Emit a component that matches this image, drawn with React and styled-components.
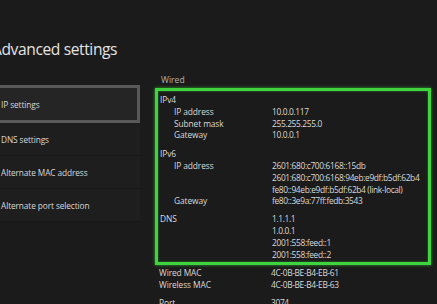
import React from "react"
import styled, { createGlobalStyle } from "styled-components"

const GlobalStyle = createGlobalStyle`
    html, body{
        margin: 0;
        padding: 0;
        background: #1b1b1b;
        overflow: hidden;
    }
    body{
        font-family: "Open Sans", "Noto Sans", sans-serif;
        color: #d6d6d6;
    }
`

const Screen = styled.div`
    width: 437px;
    height: 304px;
    overflow: hidden;
    background: #1b1b1b;
`

const Title = styled.h1`
    margin: 0 0 0 -8px;
    padding-top: 38px;
    height: 49px;
    box-sizing: border-box;
    font-size: 15.6px;
    font-weight: 400;
    line-height: 22px;
    color: #e4e4e4;
    letter-spacing: -0.4px;
`

const Body = styled.div`
    display: flex;
    gap: 15px;
`

const Menu = styled.div`
    width: 150px;
    margin-left: -10px;
    padding-top: 36px;
    display: flex;
    flex-direction: column;
`

const MenuItem = styled.div`
    height: ${p => p.$selected ? 38 : 33}px;
    box-sizing: border-box;
    display: flex;
    align-items: center;
    padding-left: ${p => p.$selected ? 8 : 11}px;
    font-size: 8.3px;
    letter-spacing: -0.1px;
    color: #d8d8d8;
    background: ${p => p.$selected ? '#252525' : '#1e1e1e'};
    border: ${p => p.$selected ? '3px solid #585858' : 'none'};
    border-bottom: ${p => p.$selected ? '3px solid #585858' : '1px solid #181818'};
`

const Details = styled.div`
    width: 276px;
    padding-top: 25px;
`

const Caption = styled.div`
    font-size: 8.6px;
    line-height: 12px;
    color: #b4b4b4;
    padding-left: 6px;
    margin-bottom: 2px;
`

const Highlight = styled.div`
    border: 3px solid #3fd43f;
    box-shadow: 0 0 3px #2fa52f, inset 0 0 2px #2fa52f;
    padding: 3px 0 2px 2px;
`

const Section = styled.div`
    margin-bottom: ${p => p.$gap || 0}px;
`

const Row = styled.div`
    display: grid;
    grid-template-columns: 112px 1fr;
    font-size: 8.4px;
    line-height: 11.8px;
    color: #dadada;
    white-space: nowrap;
`

const Label = styled.span`
    padding-left: ${p => p.$indent ? 14 : 0}px;
    letter-spacing: -0.1px;
`

const Values = styled.div`
    display: flex;
    flex-direction: column;
    letter-spacing: -0.35px;
`

const Plain = styled.div`
    padding: 2px 0 0 4px;
`

const menu = ['IP settings', 'DNS settings', 'Alternate MAC address', 'Alternate port selection']

function Line ({label, indent, values = []}) {
    return (
        <Row>
            <Label $indent={indent}>{label}</Label>
            <Values>{values.map(v => <span key={v}>{v}</span>)}</Values>
        </Row>
    )
}

function App () {
    return (
    <Screen>
        <GlobalStyle />
        <Title>Advanced settings</Title>
        <Body>
            <Menu>
                {menu.map((item, idx) => <MenuItem key={item} $selected={idx === 0}>{item}</MenuItem>)}
            </Menu>
            <Details>
                <Caption>Wired</Caption>
                <Highlight>
                    <Section $gap={7}>
                        <Line label="IPv4" />
                        <Line label="IP address" indent values={['10.0.0.117']} />
                        <Line label="Subnet mask" indent values={['255.255.255.0']} />
                        <Line label="Gateway" indent values={['10.0.0.1']} />
                    </Section>
                    <Section $gap={6}>
                        <Line label="IPv6" />
                        <Line label="IP address" indent values={[
                            '2601:680:c700:6168::15db',
                            '2601:680:c700:6168:94eb:e9df:b5df:62b4',
                            'fe80::94eb:e9df:b5df:62b4 (link-local)'
                        ]} />
                        <Line label="Gateway" indent values={['fe80::3e9a:77ff:fedb:3543']} />
                    </Section>
                    <Section>
                        <Line label="DNS" values={['1.1.1.1', '1.0.0.1', '2001:558:feed::1', '2001:558:feed::2']} />
                    </Section>
                </Highlight>
                <Plain>
                    <Section $gap={6}>
                        <Line label="Wired MAC" values={['4C-0B-BE-B4-EB-61']} />
                        <Line label="Wireless MAC" values={['4C-0B-BE-B4-EB-63']} />
                    </Section>
                    <Line label="Port" values={['3074']} />
                </Plain>
            </Details>
        </Body>
    </Screen>)
}

export default App
